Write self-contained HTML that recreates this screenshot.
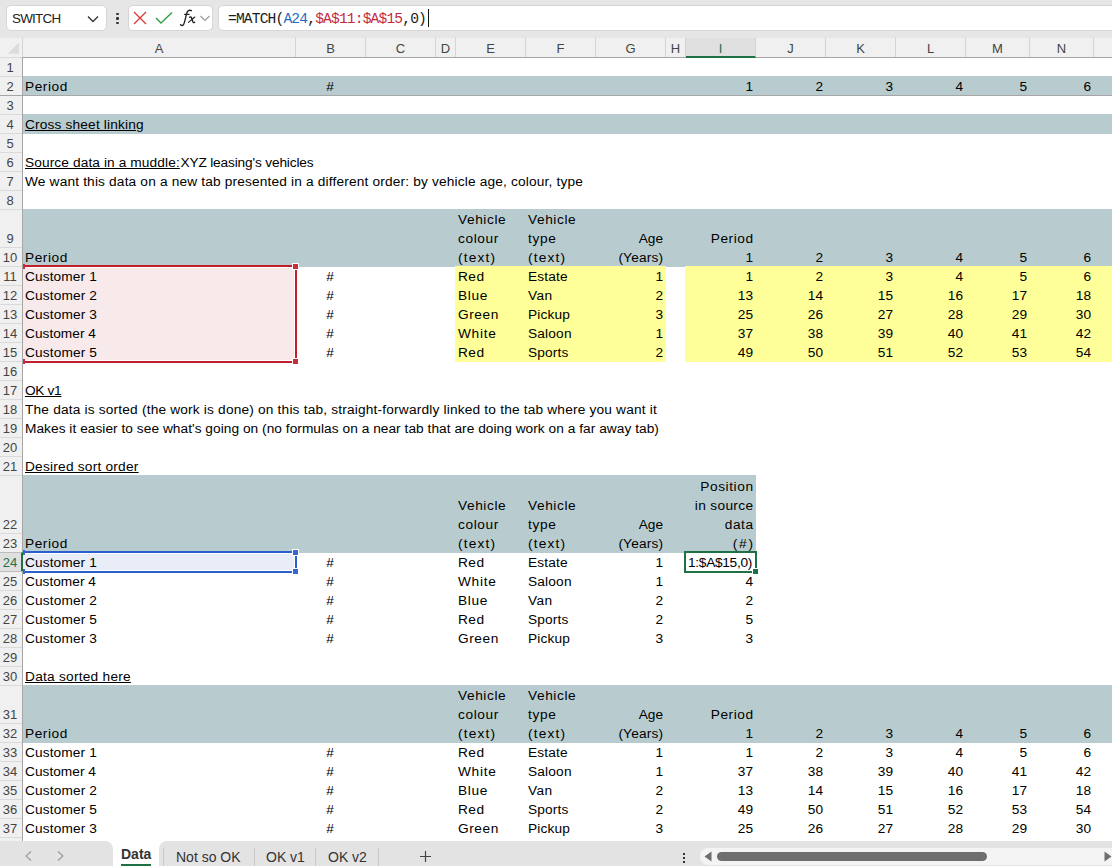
<!DOCTYPE html>
<html><head><meta charset="utf-8">
<style>
*{box-sizing:border-box}
html,body{margin:0;padding:0;width:1112px;height:866px;overflow:hidden;background:#fff;font-family:"Liberation Sans",sans-serif;position:relative}
.t{position:absolute;font-size:13.7px;line-height:19px;white-space:nowrap;color:#000}
.u{text-decoration:underline}
.f{position:absolute}
#tb{position:absolute;left:0;top:0;width:1112px;height:38px;background:#e6e6e6}
.box{position:absolute;background:#fff;border:1px solid #d6d6d6;border-radius:5px}
#colhdr{position:absolute;left:0;top:38px;width:1112px;height:20px;background:#f0f0f0;border-bottom:1px solid #a6a6a6}
.ch{position:absolute;top:0;height:19px;line-height:22px;text-align:center;font-size:13px;color:#444;border-right:1px solid #d4d4d4}
.ch.sel{background:#e0e0e0;color:#1e7145;border-bottom:2px solid #1e7145;height:20px}
#rowhdr{position:absolute;left:0;top:57px;width:23px;height:784px;background:#f0f0f0;border-right:1px solid #a6a6a6}
.rh{position:absolute;left:0;width:22px;border-top:1px solid #dadada;font-size:13px;color:#444}
.rh span{position:absolute;left:-1px;width:22px;text-align:center;line-height:19px}
.rh.sel{background:#e0e0e0;color:#1e7145;width:23px;border-right:2px solid #1e7145;border-top:1px solid #bdbdbd}
.rh.sel+.rh{border-top-color:#bdbdbd}
</style></head><body>
<div id="tb">
  <div class="box" style="left:6px;top:5px;width:101px;height:26px"></div>
  <div class="t" style="left:12px;top:8.5px;font-size:13.4px;letter-spacing:-0.75px;color:#222">SWITCH</div>
  <svg style="position:absolute;left:86px;top:14px" width="14" height="10" viewBox="0 0 14 10"><path d="M2 2.5 L7 7.5 L12 2.5" fill="none" stroke="#333" stroke-width="1.3"/></svg>
  <div style="position:absolute;left:116px;top:12.5px;width:2.6px;height:2.6px;background:#333;border-radius:1px"></div>
  <div style="position:absolute;left:116px;top:17px;width:2.6px;height:2.6px;background:#333;border-radius:1px"></div>
  <div style="position:absolute;left:116px;top:21.5px;width:2.6px;height:2.6px;background:#333;border-radius:1px"></div>
  <div class="box" style="left:128px;top:5px;width:85px;height:26px"></div>
  <svg style="position:absolute;left:132px;top:11px" width="16" height="14" viewBox="0 0 16 14"><path d="M2 1 L14 13 M14 1 L2 13" fill="none" stroke="#e03c3c" stroke-width="1.4"/></svg>
  <svg style="position:absolute;left:155px;top:11px" width="18" height="14" viewBox="0 0 18 14"><path d="M1 7 L6 12 L17 1.5" fill="none" stroke="#2e9e48" stroke-width="1.4"/></svg>
  <svg style="position:absolute;left:175px;top:5px" width="25" height="25" viewBox="0 0 25 25"><path d="M5.6 19.6 C6.6 21.4 8.6 20.8 9.6 16.8 L11.6 8.6 C12.4 5.6 14.2 4.6 16.4 5.6" fill="none" stroke="#222" stroke-width="1.35" stroke-linecap="round"/><path d="M9.2 9.4 L14.6 9.4" stroke="#222" stroke-width="1.2"/><path d="M14.6 12.2 C15.8 11.6 16.4 12 17 14 L17.8 16.6 C18.2 17.8 18.8 17.9 19.6 17.2" fill="none" stroke="#222" stroke-width="1.4" stroke-linecap="round"/><path d="M13.4 17.4 L19.8 12" stroke="#222" stroke-width="1.1" stroke-linecap="round"/></svg>
  <svg style="position:absolute;left:199px;top:14px" width="12" height="9" viewBox="0 0 12 9"><path d="M1.5 2 L6 6.5 L10.5 2" fill="none" stroke="#999" stroke-width="1.1"/></svg>
  <div class="box" style="left:218px;top:5px;width:900px;height:26px;border-radius:5px 0 0 5px"></div>
  <div style="position:absolute;left:228px;top:9.7px;font-family:'Liberation Mono',monospace;font-size:14.6px;letter-spacing:-0.84px;line-height:19px;color:#1a1a1a;white-space:pre">=MATCH(<span style="color:#1f6cc4">A24</span>,<span style="color:#c42a3c">$A$11:$A$15</span>,0)</div>
  <div style="position:absolute;left:428px;top:9px;width:1px;height:18px;background:#111"></div>
</div>
<div id="colhdr">
  <svg style="position:absolute;left:0;top:0" width="22" height="19" viewBox="0 0 22 19"><path d="M19 4.6 L19 15.7 L7.6 15.7 Z" fill="#dcdcdc"/></svg>
  <div style="position:absolute;left:22px;top:0;width:1px;height:19px;background:#d4d4d4"></div>
<div class="ch" style="left:23px;width:273px">A</div>
<div class="ch" style="left:296px;width:70px">B</div>
<div class="ch" style="left:366px;width:70px">C</div>
<div class="ch" style="left:436px;width:20px">D</div>
<div class="ch" style="left:456px;width:70px">E</div>
<div class="ch" style="left:526px;width:70px">F</div>
<div class="ch" style="left:596px;width:70px">G</div>
<div class="ch" style="left:666px;width:20px">H</div>
<div class="ch sel" style="left:686px;width:70px">I</div>
<div class="ch" style="left:756px;width:70px">J</div>
<div class="ch" style="left:826px;width:70px">K</div>
<div class="ch" style="left:896px;width:70px">L</div>
<div class="ch" style="left:966px;width:64px">M</div>
<div class="ch" style="left:1030px;width:64px">N</div>
<div class="ch" style="left:1094px;width:70px">O</div>
</div>
<div id="rowhdr">
<div class="rh" style="top:0px;height:19px"><span style="top:0px">1</span></div>
<div class="rh" style="top:19px;height:19px"><span style="top:0px">2</span></div>
<div class="rh" style="top:38px;height:19px"><span style="top:0px">3</span></div>
<div class="rh" style="top:57px;height:19px"><span style="top:0px">4</span></div>
<div class="rh" style="top:76px;height:19px"><span style="top:0px">5</span></div>
<div class="rh" style="top:95px;height:19px"><span style="top:0px">6</span></div>
<div class="rh" style="top:114px;height:19px"><span style="top:0px">7</span></div>
<div class="rh" style="top:133px;height:19px"><span style="top:0px">8</span></div>
<div class="rh" style="top:152px;height:38px"><span style="top:19px">9</span></div>
<div class="rh" style="top:190px;height:19px"><span style="top:0px">10</span></div>
<div class="rh" style="top:209px;height:19px"><span style="top:0px">11</span></div>
<div class="rh" style="top:228px;height:19px"><span style="top:0px">12</span></div>
<div class="rh" style="top:247px;height:19px"><span style="top:0px">13</span></div>
<div class="rh" style="top:266px;height:19px"><span style="top:0px">14</span></div>
<div class="rh" style="top:285px;height:19px"><span style="top:0px">15</span></div>
<div class="rh" style="top:304px;height:19px"><span style="top:0px">16</span></div>
<div class="rh" style="top:323px;height:19px"><span style="top:0px">17</span></div>
<div class="rh" style="top:342px;height:19px"><span style="top:0px">18</span></div>
<div class="rh" style="top:361px;height:19px"><span style="top:0px">19</span></div>
<div class="rh" style="top:380px;height:19px"><span style="top:0px">20</span></div>
<div class="rh" style="top:399px;height:19px"><span style="top:0px">21</span></div>
<div class="rh" style="top:418px;height:58px"><span style="top:39px">22</span></div>
<div class="rh" style="top:476px;height:19px"><span style="top:0px">23</span></div>
<div class="rh sel" style="top:495px;height:19px"><span style="top:0px">24</span></div>
<div class="rh" style="top:514px;height:19px"><span style="top:0px">25</span></div>
<div class="rh" style="top:533px;height:19px"><span style="top:0px">26</span></div>
<div class="rh" style="top:552px;height:19px"><span style="top:0px">27</span></div>
<div class="rh" style="top:571px;height:19px"><span style="top:0px">28</span></div>
<div class="rh" style="top:590px;height:19px"><span style="top:0px">29</span></div>
<div class="rh" style="top:609px;height:19px"><span style="top:0px">30</span></div>
<div class="rh" style="top:628px;height:38px"><span style="top:19px">31</span></div>
<div class="rh" style="top:666px;height:19px"><span style="top:0px">32</span></div>
<div class="rh" style="top:685px;height:19px"><span style="top:0px">33</span></div>
<div class="rh" style="top:704px;height:19px"><span style="top:0px">34</span></div>
<div class="rh" style="top:723px;height:19px"><span style="top:0px">35</span></div>
<div class="rh" style="top:742px;height:19px"><span style="top:0px">36</span></div>
<div class="rh" style="top:761px;height:19px"><span style="top:0px">37</span></div>
<div class="rh" style="top:780px;height:19px"><span style="top:0px">38</span></div>
</div>
<div class="f" style="left:23px;top:76px;width:1141px;height:20px;background:#b8cccf"></div>
<div class="f" style="left:23px;top:114px;width:1141px;height:20px;background:#b8cccf"></div>
<div class="f" style="left:23px;top:209px;width:1141px;height:58px;background:#b8cccf"></div>
<div class="f" style="left:23px;top:266px;width:273px;height:96px;background:#f8e9ea"></div>
<div class="f" style="left:455px;top:266px;width:211px;height:96px;background:#ffff99"></div>
<div class="f" style="left:685px;top:266px;width:479px;height:96px;background:#ffff99"></div>
<div class="f" style="left:23px;top:475px;width:733px;height:78px;background:#b8cccf"></div>
<div class="f" style="left:23px;top:552px;width:273px;height:20px;background:#e8edf8"></div>
<div class="f" style="left:23px;top:685px;width:1141px;height:58px;background:#b8cccf"></div>
<div class="t" style="top:76.75px;left:25px;letter-spacing:0.540px;">Period</div>
<div class="t" style="top:76.75px;left:295px;width:70px;text-align:center;">#</div>
<div class="t" style="top:76.75px;right:359.00px;">1</div>
<div class="t" style="top:76.75px;right:289.00px;">2</div>
<div class="t" style="top:76.75px;right:219.00px;">3</div>
<div class="t" style="top:76.75px;right:149.00px;">4</div>
<div class="t" style="top:76.75px;right:85.00px;">5</div>
<div class="t" style="top:76.75px;right:21.00px;">6</div>
<div class="t" style="top:114.75px;left:25px;letter-spacing:0.167px;text-decoration:underline;">Cross sheet linking</div>
<div class="t" style="top:152.75px;left:25px"><span class="u" style="letter-spacing:0.109px">Source data in a muddle:</span><span style="letter-spacing:-0.159px;margin-left:-3px"> XYZ leasing&#39;s vehicles</span></div>
<div class="t" style="top:171.75px;left:25px;letter-spacing:0.167px;">We want this data on a new tab presented in a different order: by vehicle age, colour, type</div>
<div class="t" style="top:209.75px;left:458px;letter-spacing:0.583px;">Vehicle</div>
<div class="t" style="top:228.75px;left:458px;letter-spacing:0.600px;">colour</div>
<div class="t" style="top:209.75px;left:528px;letter-spacing:0.583px;">Vehicle</div>
<div class="t" style="top:228.75px;left:528px;letter-spacing:0.667px;">type</div>
<div class="t" style="top:228.75px;right:449.00px;letter-spacing:0.000px;">Age</div>
<div class="t" style="top:228.75px;right:358.46px;letter-spacing:0.540px;">Period</div>
<div class="t" style="top:247.75px;left:25px;letter-spacing:0.540px;">Period</div>
<div class="t" style="top:247.75px;left:458px;letter-spacing:1.200px;">(text)</div>
<div class="t" style="top:247.75px;left:528px;letter-spacing:1.200px;">(text)</div>
<div class="t" style="top:247.75px;right:448.83px;letter-spacing:0.167px;">(Years)</div>
<div class="t" style="top:247.75px;right:359.00px;">1</div>
<div class="t" style="top:247.75px;right:289.00px;">2</div>
<div class="t" style="top:247.75px;right:219.00px;">3</div>
<div class="t" style="top:247.75px;right:149.00px;">4</div>
<div class="t" style="top:247.75px;right:85.00px;">5</div>
<div class="t" style="top:247.75px;right:21.00px;">6</div>
<div class="t" style="top:266.75px;left:25px;letter-spacing:0.111px;">Customer 1</div>
<div class="t" style="top:266.75px;left:295px;width:70px;text-align:center;">#</div>
<div class="t" style="top:266.75px;left:458px;letter-spacing:0.450px;">Red</div>
<div class="t" style="top:266.75px;left:528px;letter-spacing:0.160px;">Estate</div>
<div class="t" style="top:266.75px;right:449.00px;">1</div>
<div class="t" style="top:266.75px;right:359.00px;">1</div>
<div class="t" style="top:266.75px;right:289.00px;">2</div>
<div class="t" style="top:266.75px;right:219.00px;">3</div>
<div class="t" style="top:266.75px;right:149.00px;">4</div>
<div class="t" style="top:266.75px;right:85.00px;">5</div>
<div class="t" style="top:266.75px;right:21.00px;">6</div>
<div class="t" style="top:285.75px;left:25px;letter-spacing:0.133px;">Customer 2</div>
<div class="t" style="top:285.75px;left:295px;width:70px;text-align:center;">#</div>
<div class="t" style="top:285.75px;left:458px;letter-spacing:0.633px;">Blue</div>
<div class="t" style="top:285.75px;left:528px;letter-spacing:0.350px;">Van</div>
<div class="t" style="top:285.75px;right:449.00px;">2</div>
<div class="t" style="top:285.75px;right:359.00px;">13</div>
<div class="t" style="top:285.75px;right:289.00px;">14</div>
<div class="t" style="top:285.75px;right:219.00px;">15</div>
<div class="t" style="top:285.75px;right:149.00px;">16</div>
<div class="t" style="top:285.75px;right:85.00px;">17</div>
<div class="t" style="top:285.75px;right:21.00px;">18</div>
<div class="t" style="top:304.75px;left:25px;letter-spacing:0.133px;">Customer 3</div>
<div class="t" style="top:304.75px;left:295px;width:70px;text-align:center;">#</div>
<div class="t" style="top:304.75px;left:458px;letter-spacing:0.550px;">Green</div>
<div class="t" style="top:304.75px;left:528px;letter-spacing:0.180px;">Pickup</div>
<div class="t" style="top:304.75px;right:449.00px;">3</div>
<div class="t" style="top:304.75px;right:359.00px;">25</div>
<div class="t" style="top:304.75px;right:289.00px;">26</div>
<div class="t" style="top:304.75px;right:219.00px;">27</div>
<div class="t" style="top:304.75px;right:149.00px;">28</div>
<div class="t" style="top:304.75px;right:85.00px;">29</div>
<div class="t" style="top:304.75px;right:21.00px;">30</div>
<div class="t" style="top:323.75px;left:25px;letter-spacing:0.022px;">Customer 4</div>
<div class="t" style="top:323.75px;left:295px;width:70px;text-align:center;">#</div>
<div class="t" style="top:323.75px;left:458px;letter-spacing:0.700px;">White</div>
<div class="t" style="top:323.75px;left:528px;letter-spacing:0.180px;">Saloon</div>
<div class="t" style="top:323.75px;right:449.00px;">1</div>
<div class="t" style="top:323.75px;right:359.00px;">37</div>
<div class="t" style="top:323.75px;right:289.00px;">38</div>
<div class="t" style="top:323.75px;right:219.00px;">39</div>
<div class="t" style="top:323.75px;right:149.00px;">40</div>
<div class="t" style="top:323.75px;right:85.00px;">41</div>
<div class="t" style="top:323.75px;right:21.00px;">42</div>
<div class="t" style="top:342.75px;left:25px;letter-spacing:0.133px;">Customer 5</div>
<div class="t" style="top:342.75px;left:295px;width:70px;text-align:center;">#</div>
<div class="t" style="top:342.75px;left:458px;letter-spacing:0.450px;">Red</div>
<div class="t" style="top:342.75px;left:528px;letter-spacing:0.160px;">Sports</div>
<div class="t" style="top:342.75px;right:449.00px;">2</div>
<div class="t" style="top:342.75px;right:359.00px;">49</div>
<div class="t" style="top:342.75px;right:289.00px;">50</div>
<div class="t" style="top:342.75px;right:219.00px;">51</div>
<div class="t" style="top:342.75px;right:149.00px;">52</div>
<div class="t" style="top:342.75px;right:85.00px;">53</div>
<div class="t" style="top:342.75px;right:21.00px;">54</div>
<div class="t" style="top:380.75px;left:25px;letter-spacing:-0.325px;text-decoration:underline;">OK v1</div>
<div class="t" style="top:399.75px;left:25px;letter-spacing:0.186px;">The data is sorted (the work is done) on this tab, straight-forwardly linked to the tab where you want it</div>
<div class="t" style="top:418.75px;left:25px;letter-spacing:0.042px;">Makes it easier to see what&#39;s going on (no formulas on a near tab that are doing work on a far away tab)</div>
<div class="t" style="top:456.75px;left:25px;letter-spacing:0.224px;text-decoration:underline;">Desired sort order</div>
<div class="t" style="top:495.75px;left:458px;letter-spacing:0.583px;">Vehicle</div>
<div class="t" style="top:514.75px;left:458px;letter-spacing:0.600px;">colour</div>
<div class="t" style="top:495.75px;left:528px;letter-spacing:0.583px;">Vehicle</div>
<div class="t" style="top:514.75px;left:528px;letter-spacing:0.667px;">type</div>
<div class="t" style="top:514.75px;right:449.00px;letter-spacing:0.000px;">Age</div>
<div class="t" style="top:476.75px;right:358.43px;letter-spacing:0.571px;">Position</div>
<div class="t" style="top:495.75px;right:358.68px;letter-spacing:0.325px;">in source</div>
<div class="t" style="top:514.75px;right:358.47px;letter-spacing:0.533px;">data</div>
<div class="t" style="top:533.75px;left:25px;letter-spacing:0.540px;">Period</div>
<div class="t" style="top:533.75px;left:458px;letter-spacing:1.200px;">(text)</div>
<div class="t" style="top:533.75px;left:528px;letter-spacing:1.200px;">(text)</div>
<div class="t" style="top:533.75px;right:448.83px;letter-spacing:0.167px;">(Years)</div>
<div class="t" style="top:533.75px;right:357.25px;letter-spacing:1.750px;">(#)</div>
<div class="t" style="top:552.75px;left:25px;letter-spacing:0.111px;">Customer 1</div>
<div class="t" style="top:552.75px;left:295px;width:70px;text-align:center;">#</div>
<div class="t" style="top:552.75px;left:458px;letter-spacing:0.450px;">Red</div>
<div class="t" style="top:552.75px;left:528px;letter-spacing:0.160px;">Estate</div>
<div class="t" style="top:552.75px;right:449.00px;">1</div>
<div class="t" style="top:571.75px;left:25px;letter-spacing:0.022px;">Customer 4</div>
<div class="t" style="top:571.75px;left:295px;width:70px;text-align:center;">#</div>
<div class="t" style="top:571.75px;left:458px;letter-spacing:0.700px;">White</div>
<div class="t" style="top:571.75px;left:528px;letter-spacing:0.180px;">Saloon</div>
<div class="t" style="top:571.75px;right:449.00px;">1</div>
<div class="t" style="top:571.75px;right:359.00px;">4</div>
<div class="t" style="top:590.75px;left:25px;letter-spacing:0.133px;">Customer 2</div>
<div class="t" style="top:590.75px;left:295px;width:70px;text-align:center;">#</div>
<div class="t" style="top:590.75px;left:458px;letter-spacing:0.633px;">Blue</div>
<div class="t" style="top:590.75px;left:528px;letter-spacing:0.350px;">Van</div>
<div class="t" style="top:590.75px;right:449.00px;">2</div>
<div class="t" style="top:590.75px;right:359.00px;">2</div>
<div class="t" style="top:609.75px;left:25px;letter-spacing:0.133px;">Customer 5</div>
<div class="t" style="top:609.75px;left:295px;width:70px;text-align:center;">#</div>
<div class="t" style="top:609.75px;left:458px;letter-spacing:0.450px;">Red</div>
<div class="t" style="top:609.75px;left:528px;letter-spacing:0.160px;">Sports</div>
<div class="t" style="top:609.75px;right:449.00px;">2</div>
<div class="t" style="top:609.75px;right:359.00px;">5</div>
<div class="t" style="top:628.75px;left:25px;letter-spacing:0.133px;">Customer 3</div>
<div class="t" style="top:628.75px;left:295px;width:70px;text-align:center;">#</div>
<div class="t" style="top:628.75px;left:458px;letter-spacing:0.550px;">Green</div>
<div class="t" style="top:628.75px;left:528px;letter-spacing:0.180px;">Pickup</div>
<div class="t" style="top:628.75px;right:449.00px;">3</div>
<div class="t" style="top:628.75px;right:359.00px;">3</div>
<div class="t" style="top:666.75px;left:25px;letter-spacing:0.247px;text-decoration:underline;">Data sorted here</div>
<div class="t" style="top:685.75px;left:458px;letter-spacing:0.583px;">Vehicle</div>
<div class="t" style="top:704.75px;left:458px;letter-spacing:0.600px;">colour</div>
<div class="t" style="top:685.75px;left:528px;letter-spacing:0.583px;">Vehicle</div>
<div class="t" style="top:704.75px;left:528px;letter-spacing:0.667px;">type</div>
<div class="t" style="top:704.75px;right:449.00px;letter-spacing:0.000px;">Age</div>
<div class="t" style="top:704.75px;right:358.46px;letter-spacing:0.540px;">Period</div>
<div class="t" style="top:723.75px;left:25px;letter-spacing:0.540px;">Period</div>
<div class="t" style="top:723.75px;left:458px;letter-spacing:1.200px;">(text)</div>
<div class="t" style="top:723.75px;left:528px;letter-spacing:1.200px;">(text)</div>
<div class="t" style="top:723.75px;right:448.83px;letter-spacing:0.167px;">(Years)</div>
<div class="t" style="top:723.75px;right:359.00px;">1</div>
<div class="t" style="top:723.75px;right:289.00px;">2</div>
<div class="t" style="top:723.75px;right:219.00px;">3</div>
<div class="t" style="top:723.75px;right:149.00px;">4</div>
<div class="t" style="top:723.75px;right:85.00px;">5</div>
<div class="t" style="top:723.75px;right:21.00px;">6</div>
<div class="t" style="top:742.75px;left:25px;letter-spacing:0.111px;">Customer 1</div>
<div class="t" style="top:742.75px;left:295px;width:70px;text-align:center;">#</div>
<div class="t" style="top:742.75px;left:458px;letter-spacing:0.450px;">Red</div>
<div class="t" style="top:742.75px;left:528px;letter-spacing:0.160px;">Estate</div>
<div class="t" style="top:742.75px;right:449.00px;">1</div>
<div class="t" style="top:742.75px;right:359.00px;">1</div>
<div class="t" style="top:742.75px;right:289.00px;">2</div>
<div class="t" style="top:742.75px;right:219.00px;">3</div>
<div class="t" style="top:742.75px;right:149.00px;">4</div>
<div class="t" style="top:742.75px;right:85.00px;">5</div>
<div class="t" style="top:742.75px;right:21.00px;">6</div>
<div class="t" style="top:761.75px;left:25px;letter-spacing:0.022px;">Customer 4</div>
<div class="t" style="top:761.75px;left:295px;width:70px;text-align:center;">#</div>
<div class="t" style="top:761.75px;left:458px;letter-spacing:0.700px;">White</div>
<div class="t" style="top:761.75px;left:528px;letter-spacing:0.180px;">Saloon</div>
<div class="t" style="top:761.75px;right:449.00px;">1</div>
<div class="t" style="top:761.75px;right:359.00px;">37</div>
<div class="t" style="top:761.75px;right:289.00px;">38</div>
<div class="t" style="top:761.75px;right:219.00px;">39</div>
<div class="t" style="top:761.75px;right:149.00px;">40</div>
<div class="t" style="top:761.75px;right:85.00px;">41</div>
<div class="t" style="top:761.75px;right:21.00px;">42</div>
<div class="t" style="top:780.75px;left:25px;letter-spacing:0.133px;">Customer 2</div>
<div class="t" style="top:780.75px;left:295px;width:70px;text-align:center;">#</div>
<div class="t" style="top:780.75px;left:458px;letter-spacing:0.633px;">Blue</div>
<div class="t" style="top:780.75px;left:528px;letter-spacing:0.350px;">Van</div>
<div class="t" style="top:780.75px;right:449.00px;">2</div>
<div class="t" style="top:780.75px;right:359.00px;">13</div>
<div class="t" style="top:780.75px;right:289.00px;">14</div>
<div class="t" style="top:780.75px;right:219.00px;">15</div>
<div class="t" style="top:780.75px;right:149.00px;">16</div>
<div class="t" style="top:780.75px;right:85.00px;">17</div>
<div class="t" style="top:780.75px;right:21.00px;">18</div>
<div class="t" style="top:799.75px;left:25px;letter-spacing:0.133px;">Customer 5</div>
<div class="t" style="top:799.75px;left:295px;width:70px;text-align:center;">#</div>
<div class="t" style="top:799.75px;left:458px;letter-spacing:0.450px;">Red</div>
<div class="t" style="top:799.75px;left:528px;letter-spacing:0.160px;">Sports</div>
<div class="t" style="top:799.75px;right:449.00px;">2</div>
<div class="t" style="top:799.75px;right:359.00px;">49</div>
<div class="t" style="top:799.75px;right:289.00px;">50</div>
<div class="t" style="top:799.75px;right:219.00px;">51</div>
<div class="t" style="top:799.75px;right:149.00px;">52</div>
<div class="t" style="top:799.75px;right:85.00px;">53</div>
<div class="t" style="top:799.75px;right:21.00px;">54</div>
<div class="t" style="top:818.75px;left:25px;letter-spacing:0.133px;">Customer 3</div>
<div class="t" style="top:818.75px;left:295px;width:70px;text-align:center;">#</div>
<div class="t" style="top:818.75px;left:458px;letter-spacing:0.550px;">Green</div>
<div class="t" style="top:818.75px;left:528px;letter-spacing:0.180px;">Pickup</div>
<div class="t" style="top:818.75px;right:449.00px;">3</div>
<div class="t" style="top:818.75px;right:359.00px;">25</div>
<div class="t" style="top:818.75px;right:289.00px;">26</div>
<div class="t" style="top:818.75px;right:219.00px;">27</div>
<div class="t" style="top:818.75px;right:149.00px;">28</div>
<div class="t" style="top:818.75px;right:85.00px;">29</div>
<div class="t" style="top:818.75px;right:21.00px;">30</div>
<!-- freeze line -->
<div style="position:absolute;left:0;top:95px;width:1112px;height:1px;background:#a6a6a6"></div>
<!-- red range A11:A15 -->
<div style="position:absolute;left:23px;top:265px;width:272px;height:2px;background:#c41e2d"></div>
<div style="position:absolute;left:23px;top:361px;width:272px;height:2px;background:#c41e2d"></div>
<div style="position:absolute;left:295px;top:265px;width:2px;height:98px;background:#c41e2d"></div>
<div style="position:absolute;left:23px;top:267px;width:272px;height:1px;background:#fff"></div>
<div style="position:absolute;left:23px;top:360px;width:272px;height:1px;background:#fff"></div>
<div style="position:absolute;left:294px;top:267px;width:1px;height:94px;background:#fff"></div>
<div style="position:absolute;left:292px;top:263px;width:7px;height:7px;background:#fff"></div>
<div style="position:absolute;left:293px;top:264px;width:5px;height:5px;background:#c62f3b"></div>
<div style="position:absolute;left:292px;top:358px;width:7px;height:7px;background:#fff"></div>
<div style="position:absolute;left:293px;top:359px;width:5px;height:5px;background:#c62f3b"></div>
<div style="position:absolute;left:23px;top:264px;width:2px;height:5px;background:#c62f3b"></div>
<div style="position:absolute;left:23px;top:359px;width:2px;height:5px;background:#c62f3b"></div>
<!-- blue range A24 -->
<div style="position:absolute;left:23px;top:551px;width:272px;height:2px;background:#2b5fcf"></div>
<div style="position:absolute;left:23px;top:571px;width:272px;height:2px;background:#2b5fcf"></div>
<div style="position:absolute;left:295px;top:551px;width:2px;height:22px;background:#2b5fcf"></div>
<div style="position:absolute;left:23px;top:553px;width:272px;height:1px;background:#fff"></div>
<div style="position:absolute;left:23px;top:570px;width:272px;height:1px;background:#fff"></div>
<div style="position:absolute;left:294px;top:553px;width:1px;height:18px;background:#fff"></div>
<div style="position:absolute;left:292px;top:549px;width:7px;height:7px;background:#fff"></div>
<div style="position:absolute;left:293px;top:550px;width:5px;height:5px;background:#3567d0"></div>
<div style="position:absolute;left:292px;top:568px;width:7px;height:7px;background:#fff"></div>
<div style="position:absolute;left:293px;top:569px;width:5px;height:5px;background:#3567d0"></div>
<div style="position:absolute;left:23px;top:550px;width:2px;height:5px;background:#3567d0"></div>
<div style="position:absolute;left:23px;top:569px;width:2px;height:5px;background:#3567d0"></div>
<!-- edit cell I24 -->
<div style="position:absolute;left:684px;top:551px;width:73px;height:22px;border:2px solid #1e7145;background:#fff;overflow:hidden">
  <div class="t" style="right:3px;top:-0.5px;letter-spacing:-0.3px">1:$A$15,0)</div>
</div>
<div style="position:absolute;left:752px;top:568px;width:7px;height:7px;background:#fff"></div>
<div style="position:absolute;left:753px;top:569px;width:5px;height:5px;background:#1e7145"></div>
<!-- tab bar -->
<div style="position:absolute;left:0;top:841px;width:113px;height:25px;background:#e3e3e3;border-radius:0 8px 0 0"></div>
<div style="position:absolute;left:159px;top:841px;width:953px;height:25px;background:#e3e3e3;border-radius:8px 0 0 0"></div>
<svg style="position:absolute;left:22px;top:850px" width="12" height="12" viewBox="0 0 12 12"><path d="M9 1.5 L4 6 L9 10.5" fill="none" stroke="#999" stroke-width="1.1"/></svg>
<svg style="position:absolute;left:55px;top:850px" width="12" height="12" viewBox="0 0 12 12"><path d="M3 1.5 L8 6 L3 10.5" fill="none" stroke="#999" stroke-width="1.1"/></svg>
<div style="position:absolute;left:121px;top:845px;font-size:14px;font-weight:bold;line-height:19px;color:#333">Data</div>
<div style="position:absolute;left:121px;top:864px;width:30px;height:2px;background:#1e7145"></div>
<div style="position:absolute;left:163px;top:848px;width:1px;height:18px;background:#c8c8c8"></div>
<div style="position:absolute;left:176px;top:848px;font-size:14px;line-height:19px;color:#333">Not so OK</div>
<div style="position:absolute;left:254px;top:848px;width:1px;height:18px;background:#c8c8c8"></div>
<div style="position:absolute;left:266px;top:848px;font-size:14px;line-height:19px;color:#333">OK v1</div>
<div style="position:absolute;left:315px;top:848px;width:1px;height:18px;background:#c8c8c8"></div>
<div style="position:absolute;left:328px;top:848px;font-size:14px;line-height:19px;color:#333">OK v2</div>
<div style="position:absolute;left:378px;top:848px;width:1px;height:18px;background:#c8c8c8"></div>
<svg style="position:absolute;left:419px;top:850px" width="13" height="13" viewBox="0 0 13 13"><path d="M6.5 1 V12 M1 6.5 H12" fill="none" stroke="#444" stroke-width="1.2"/></svg>
<div style="position:absolute;left:683px;top:853px;width:2px;height:2px;background:#333"></div>
<div style="position:absolute;left:683px;top:857px;width:2px;height:2px;background:#333"></div>
<div style="position:absolute;left:683px;top:861px;width:2px;height:2px;background:#333"></div>
<div style="position:absolute;left:700px;top:848px;width:420px;height:17px;background:#f4f4f4;border-radius:8px"></div>
<svg style="position:absolute;left:704px;top:851px" width="8" height="11" viewBox="0 0 8 11"><path d="M7.5 0.5 L0.5 5.5 L7.5 10.5 Z" fill="#6e6e6e"/></svg>
<div style="position:absolute;left:717px;top:852px;width:270px;height:9px;background:#6e6e6e;border-radius:5px"></div>
<svg style="position:absolute;left:1104px;top:851px" width="8" height="11" viewBox="0 0 8 11"><path d="M0.5 0.5 L7.5 5.5 L0.5 10.5 Z" fill="#6e6e6e"/></svg>
</body></html>
